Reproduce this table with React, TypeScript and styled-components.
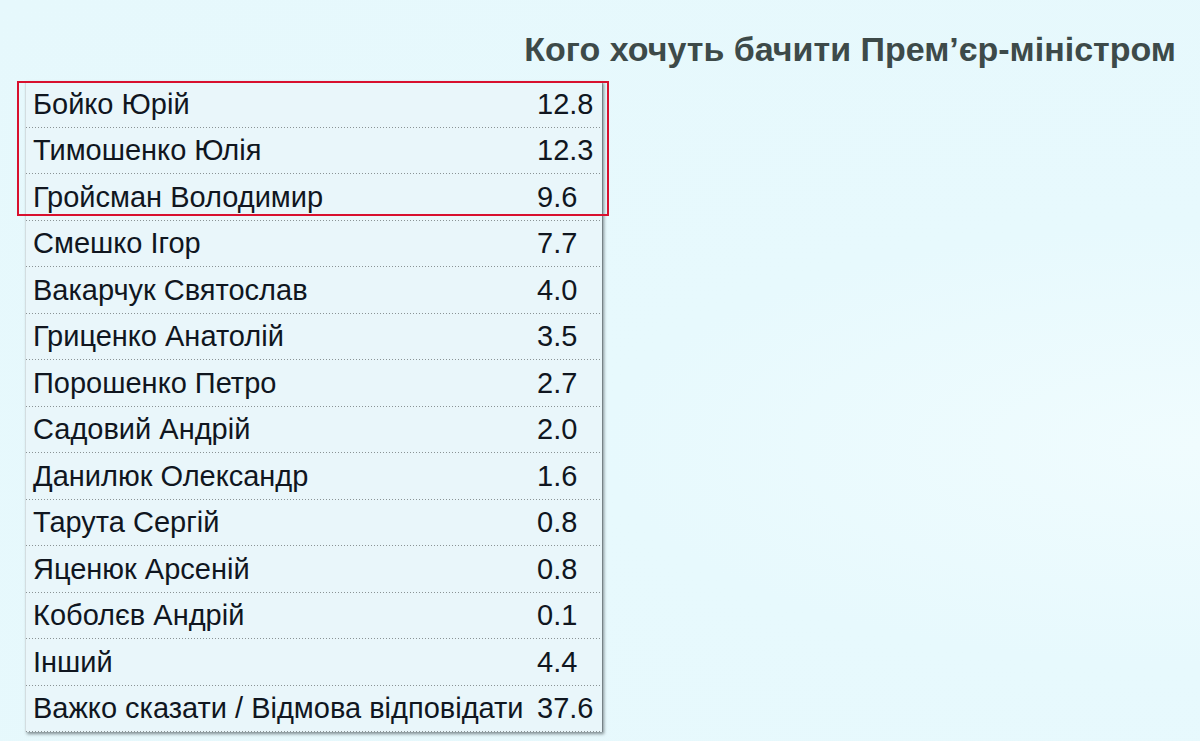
import React from "react";
import styled, { createGlobalStyle } from "styled-components";

const GlobalStyle = createGlobalStyle`
  html, body {
    margin: 0;
    padding: 0;
    background: #e7f9fd;
  }
  body {
    font-family: "Liberation Sans", Arial, sans-serif;
  }
`;

const Page = styled.div`
  width: 1200px;
  height: 741px;
  box-sizing: border-box;
  display: flex;
  flex-direction: column;
  background: radial-gradient(ellipse at 100% 60%, #f0fcfe 0%, #e7f9fd 35%, #e6f8fc 100%);
  overflow: hidden;
`;

const Title = styled.h1`
  margin: 30px 24px 0 0;
  align-self: flex-end;
  font-family: "Liberation Sans", Arial, sans-serif;
  font-size: 34px;
  line-height: 38px;
  font-weight: bold;
  color: #3d4a49;
`;

const TableWrap = styled.div`
  position: relative;
  margin: 13px 0 0 25px;
  align-self: flex-start;
`;

const Table = styled.div`
  display: grid;
  grid-template-columns: 501px 75px;
  grid-auto-rows: 46.5px;
  background: #e9f6fa;
  border-left: 1px solid #d3dde0;
  box-shadow: 2px 2px 3px rgba(60, 70, 75, 0.6), 1px 0 0 rgba(120, 130, 135, 0.5);
`;

const Cell = styled.div<{ $value?: boolean }>`
  display: flex;
  align-items: center;
  box-sizing: border-box;
  padding-left: ${(p) => (p.$value ? "10px" : "7px")};
  background-image: linear-gradient(to right, #8a9395 1px, transparent 1px);
  background-size: 3px 1px;
  background-repeat: repeat-x;
  background-position: left bottom;
  font-size: 29px;
  color: #10161f;
  white-space: nowrap;
`;

const Highlight = styled.div`
  position: absolute;
  left: -8px;
  top: 0;
  width: 592px;
  height: 135px;
  box-sizing: border-box;
  border: 2px solid #d8102e;
  pointer-events: none;
`;

const rows: [string, string][] = [
  ["Бойко Юрій", "12.8"],
  ["Тимошенко Юлія", "12.3"],
  ["Гройсман Володимир", "9.6"],
  ["Смешко Ігор", "7.7"],
  ["Вакарчук Святослав", "4.0"],
  ["Гриценко Анатолій", "3.5"],
  ["Порошенко Петро", "2.7"],
  ["Садовий Андрій", "2.0"],
  ["Данилюк Олександр", "1.6"],
  ["Тарута Сергій", "0.8"],
  ["Яценюк Арсеній", "0.8"],
  ["Коболєв Андрій", "0.1"],
  ["Інший", "4.4"],
  ["Важко сказати / Відмова відповідати", "37.6"],
];

export default function App() {
  return (
    <>
      <GlobalStyle />
      <Page>
        <Title>Кого хочуть бачити Прем’єр-міністром</Title>
        <TableWrap>
          <Table>
            {rows.map(([name, value]) => (
              <React.Fragment key={name}>
                <Cell>{name}</Cell>
                <Cell $value>{value}</Cell>
              </React.Fragment>
            ))}
          </Table>
          <Highlight />
        </TableWrap>
      </Page>
    </>
  );
}
